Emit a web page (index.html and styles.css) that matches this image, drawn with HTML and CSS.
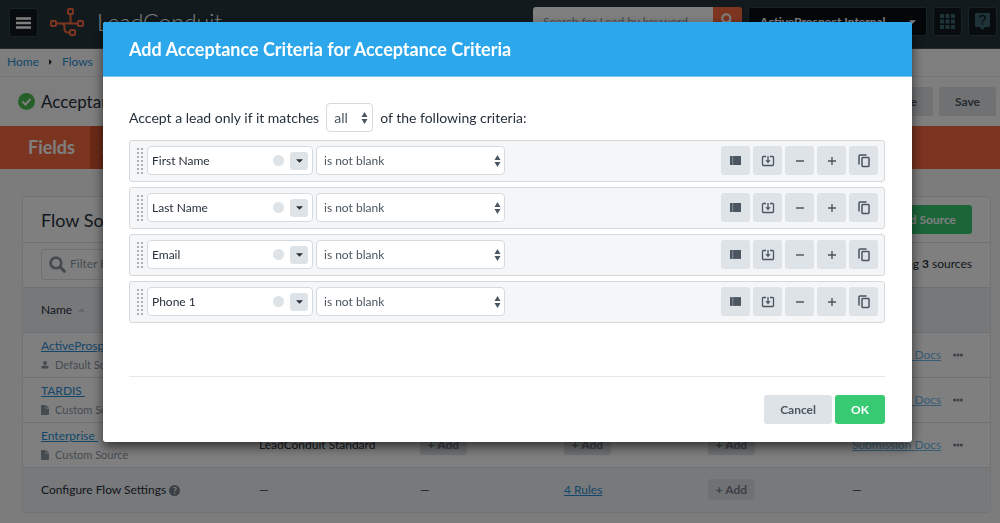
FILE: index.html
```html
<!DOCTYPE html>
<html lang="en">
<head>
<meta charset="utf-8">
<title>LeadConduit</title>
<link rel="stylesheet" href="styles.css">
</head>
<body>
<svg class="sprite" aria-hidden="true">
  <symbol id="i-list" viewBox="0 0 10 8"><path d="M0 0h10v8H0z" fill="currentColor"/><path d="M2.500 0v8" stroke="#9aa2aa" stroke-width=".7"/></symbol>
  <symbol id="i-down" viewBox="0 0 14 12"><path d="M5 1.500H2.200q-.7 0-.7.700v7.600q0 .7.700.7h9.600q.7 0 .7-.7V2.200q0-.7-.7-.7H9M7 1v6" fill="none" stroke="currentColor" stroke-width="1.300"/><path d="M4.300 5.200h5.400L7 8.300z" fill="currentColor"/></symbol>
  <symbol id="i-minus" viewBox="0 0 10 10"><path d="M1 5h8" stroke="currentColor" stroke-width="1.400"/></symbol>
  <symbol id="i-plus" viewBox="0 0 10 10"><path d="M1 5h8M5 1v8" stroke="currentColor" stroke-width="1.400"/></symbol>
  <symbol id="i-copy" viewBox="0 0 12 14"><path d="M1 10.500V2q0-1 1-1H8.500M4.700 3.500h5.600q.7 0 .7.700v7.600q0 .7-.7.7H4.700q-.7 0-.7-.7V4.200q0-.7.700-.7z" fill="none" stroke="currentColor" stroke-width="1.500"/></symbol>
  <symbol id="i-search" viewBox="0 0 16 16"><circle cx="6.500" cy="6.500" r="5" fill="none" stroke="currentColor" stroke-width="2.600"/><path d="m10.300 10.300 4 4" stroke="currentColor" stroke-width="3" stroke-linecap="round"/></symbol>
  <symbol id="i-file" viewBox="0 0 8 10"><path d="M0 1q0-1 1-1h3.500v3.500H8V9q0 1-1 1H1Q0 10 0 9zM5.200 0 8 2.800H5.200z" fill="currentColor"/></symbol>
  <symbol id="i-user" viewBox="0 0 8 8"><circle cx="4" cy="2" r="2" fill="currentColor"/><path d="M.5 7.500V6q0-1 1-1l1.500-.5h2l1.500.5q1 0 1 1v1.500z" fill="currentColor"/></symbol>
  <symbol id="i-caret" viewBox="0 0 8 4"><path d="M0 0h8L4 4z" fill="currentColor"/></symbol>
  <symbol id="i-updown" viewBox="0 0 7 12"><path d="M0.500 5h6L3.500 0zM0.500 7h6l-3 5z" fill="currentColor"/></symbol>
  <symbol id="i-dots" viewBox="0 0 10 4"><circle cx="1.600" cy="2" r="1.500" fill="currentColor"/><circle cx="5" cy="2" r="1.500" fill="currentColor"/><circle cx="8.400" cy="2" r="1.500" fill="currentColor"/></symbol>
</svg>

<header class="topbar">
  <button class="square menu" aria-label="Menu"><svg width="15" height="12" viewBox="0 0 15 12"><path d="M0 1.500h15M0 6h15M0 10.500h15" stroke="#fff" stroke-width="2.600"/></svg></button>
  <a class="brand" href="#">
    <svg width="36" height="30" viewBox="0 0 36 30" fill="none" stroke="#fb6b40" stroke-width="2"><rect x="18" y="2" width="5" height="5" rx="1"/><rect x="1" y="14" width="5" height="5" rx="1"/><rect x="28" y="14" width="5" height="5" rx="1"/><rect x="20" y="23" width="5" height="5" rx="1"/><path d="M20.500 8v8.500M7 16.500h20M11 16.500q3.500 0 3.500 3.500v2q0 3.500 4.500 3.500"/></svg>
    <span>LeadConduit</span>
  </a>
  <form class="lead-search"><input type="text" aria-label="Search for Lead by keyword" placeholder="Search for Lead by keyword"><button type="button" aria-label="Search"><svg width="13" height="13"><use href="#i-search"/></svg></button></form>
  <button class="account">ActiveProspect Internal <svg width="7" height="4"><use href="#i-caret"/></svg></button>
  <button class="square apps" aria-label="Apps"><svg width="15" height="15" viewBox="0 0 15 15" fill="currentColor"><path d="M0 0h4v4H0zM5.500 0h4v4h-4zM11 0h4v4h-4zM0 5.500h4v4H0zM5.500 5.500h4v4h-4zM11 5.500h4v4h-4zM0 11h4v4H0zM5.500 11h4v4h-4zM11 11h4v4h-4z"/></svg></button>
  <button class="square help" aria-label="Help"><svg width="15" height="17" viewBox="0 0 15 17"><path d="M1 0h13q1 0 1 1v12q0 1-1 1h-4l-2.500 3L5 14H1q-1 0-1-1V1q0-1 1-1z" fill="currentColor"/><path d="M4.800 5q0-2.500 2.700-2.500T10.200 5q0 1.500-1.400 2.200T7.500 9.300M7.500 10.300v1.500" fill="none" stroke="#12191d" stroke-width="1.300"/></svg></button>
</header>

<nav class="crumbs"><a href="#">Home</a><i></i><a href="#">Flows</a><i></i></nav>

<section class="titlebar">
  <svg width="17" height="17" viewBox="0 0 17 17"><circle cx="8.500" cy="8.500" r="8.500" fill="#4fbf50"/><path d="m4.500 8.500 3 3 5-5.500" fill="none" stroke="#fff" stroke-width="2"/></svg>
  <h1>Acceptance Criteria</h1>
  <button class="btn">Delete</button>
  <button class="btn">Save</button>
</section>

<nav class="tabs"><a href="#">Fields</a><a class="active" href="#">Sources</a></nav>

<main class="panel">
  <div class="panel-head"><h2>Flow Sources</h2><button class="btn green">Add Source</button></div>
  <div class="panel-filter">
    <label class="filter"><svg width="17" height="17"><use href="#i-search"/></svg><input type="text" aria-label="Filter Flow Sources" placeholder="Filter Flow Sources"></label>
    <span>Showing <b>3</b> sources</span>
  </div>
  <table>
    <colgroup><col class="c-name"><col class="c-type"><col class="c-add"><col class="c-add"><col class="c-add"><col></colgroup>
    <thead><tr><th>Name <svg class="sort" width="7" height="4" viewBox="0 0 8 4"><path d="M0 4h8L4 0z" fill="currentColor"/></svg></th><th></th><th></th><th></th><th></th><th></th></tr></thead>
    <tbody>
      <tr><td><a href="#">ActiveProspect</a><small><svg width="8" height="8"><use href="#i-user"/></svg>Default Source</small></td><td>LeadConduit Standard</td><td><button class="add">+ Add</button></td><td><button class="add">+ Add</button></td><td><button class="add">+ Add</button></td><td><a class="docs" href="#">Submission Docs</a><svg class="dots" width="10" height="4"><use href="#i-dots"/></svg></td></tr>
      <tr><td><a href="#">TARDIS&nbsp;</a><small><svg width="8" height="10"><use href="#i-file"/></svg>Custom Source</small></td><td>LeadConduit Standard</td><td><button class="add">+ Add</button></td><td><button class="add">+ Add</button></td><td><button class="add">+ Add</button></td><td><a class="docs" href="#">Submission Docs</a><svg class="dots" width="10" height="4"><use href="#i-dots"/></svg></td></tr>
      <tr><td><a href="#">Enterprise&nbsp;</a><small><svg width="8" height="10"><use href="#i-file"/></svg>Custom Source</small></td><td>LeadConduit Standard</td><td><button class="add">+ Add</button></td><td><button class="add">+ Add</button></td><td><button class="add">+ Add</button></td><td><a class="docs" href="#">Submission Docs</a><svg class="dots" width="10" height="4"><use href="#i-dots"/></svg></td></tr>
      <tr class="settings"><td>Configure Flow Settings <span class="q">?</span></td><td>—</td><td>—</td><td><a href="#">4 Rules</a></td><td><button class="add">+ Add</button></td><td>—</td></tr>
    </tbody>
  </table>
</main>

<div class="overlay">
  <div class="modal" role="dialog" aria-labelledby="dlg-title">
    <h2 id="dlg-title">Add Acceptance Criteria for Acceptance Criteria</h2>
    <div class="modal-body">
      <div class="sentence"><label for="mode">Accept a lead only if it matches</label>
        <span class="pick mode"><select id="mode"><option>all</option><option>any</option></select><svg width="7" height="12"><use href="#i-updown"/></svg></span>
        <span>of the following criteria:</span></div>
      <div class="rules" id="rules"></div>
      <div class="actions"><button class="btn">Cancel</button><button class="btn green">OK</button></div>
    </div>
  </div>
</div>
<script src="app.js"></script>
</body>
</html>
```
FILE: styles.css
```css
* { box-sizing: border-box; }
body { margin: 0; height: 100vh; overflow: hidden; background: #f8f8f8; color: #27313c; font: 12px/16px Lato, "Open Sans", sans-serif; }
button, input, select { font: inherit; color: inherit; margin: 0; }
button { border: 0; padding: 0; cursor: pointer; }
h1, h2 { margin: 0; font-weight: 400; }
a { color: #2a8fd8; }
.sprite { position: absolute; width: 0; height: 0; }

.topbar { display: flex; align-items: flex-start; gap: 6px; height: 49px; padding: 7px 3px 0 9px; background: #24343b; border-bottom: 1px solid #4a5357; }
.square { display: flex; align-items: center; justify-content: center; width: 29px; height: 29px; background: #12191d; border: 1px solid #2c4650; border-radius: 3px; color: #3c6670; }
.menu { margin-top: 1px; }
.brand { display: flex; flex: 1; align-items: center; gap: 11px; margin-left: 6px; color: #fff; font-size: 23px; font-weight: 300; line-height: 30px; text-decoration: none; }
.lead-search { display: flex; width: 209px; height: 29px; border-radius: 3px; overflow: hidden; }
.lead-search input { flex: 1; min-width: 0; padding: 0 10px; border: 0; background: #fff; }
.lead-search button { width: 29px; background: #fb6b40; color: #fff; }
::placeholder { color: #8b979f; opacity: 1; }
.account { display: flex; align-items: center; justify-content: space-between; width: 179px; height: 29px; padding: 0 10px 0 11px; background: #070d10; border: 1px solid #2c4650; border-radius: 3px; color: #fff; font-weight: 700; }

.crumbs { display: flex; align-items: center; gap: 10px; height: 28px; padding: 0 7px 2px; background: #fcfcfc; border-bottom: 1px solid #ececec; }
.crumbs a { text-decoration: none; }
.crumbs i { border: 3px solid transparent; border-left-color: #27313c; border-right: 0; }
.titlebar { display: flex; align-items: center; gap: 6px; height: 49px; padding: 0 4px 0 18px; background: #fcfcfc; }
.titlebar h1 { flex: 1; font-size: 17px; line-height: 24px; }
.btn { height: 29px; padding: 0 16px; border-radius: 3px; background: #dee3e7; color: #4b5661; font-weight: 700; }
.btn.green { background: #38ca73; color: #fff; }
.tabs { display: flex; height: 43px; background: #f66840; color: #fff; font-size: 18px; font-weight: 700; line-height: 43px; }
.tabs a { padding: 0 15px 0 28px; color: inherit; text-decoration: none; }
.tabs .active { padding: 0 12px; background: #d8552f; }

.panel { margin: 27px 9px 0 22px; border: 1px solid #e2e6e9; border-radius: 3px; background: #fff; }
.panel-head { display: flex; align-items: center; justify-content: space-between; height: 46px; padding: 0 18px; border-bottom: 1px solid #dbe2e6; }
.panel-head h2 { font-size: 18px; line-height: 24px; }
.panel-filter { display: flex; align-items: center; justify-content: space-between; height: 44px; padding: 0 18px 2px; }
.filter { display: flex; align-items: center; gap: 4px; width: 220px; height: 31px; padding: 0 7px; border: 1px solid #dbe2e6; border-radius: 3px; color: #8b979f; }
.filter input { flex: 1; min-width: 0; padding: 0; border: 0; background: none; }
table { width: 100%; table-layout: fixed; border-spacing: 0; }
.c-name { width: 218px; }
.c-type { width: 161px; }
.c-add { width: 144px; }
th, td { height: 45px; padding: 0 0 1px 18px; border-top: 1px solid #dbe2e6; text-align: left; vertical-align: middle; white-space: nowrap; }
th { background: #eef1f4; font-weight: 400; }
td small { display: flex; align-items: center; gap: 6px; margin-top: 4px; color: #8b979f; font-size: 11px; line-height: 14px; }
.settings td { background: #eff2f5; }
.sort, .dots { margin-left: 3px; vertical-align: middle; color: #c0c7cc; }
.dots { margin-left: 12px; color: #75808a; }
.docs { color: #6fb9ea; }
.add { width: 47px; height: 21px; border-radius: 3px; background: #dee3e7; color: #75808a; font-weight: 700; vertical-align: middle; }
.q { display: inline-block; width: 11px; height: 11px; border-radius: 50%; background: #75808a; color: #fff; font-size: 9px; font-weight: 700; line-height: 11px; text-align: center; vertical-align: middle; }

.overlay { position: fixed; inset: 0; padding: 22px 88px 0 103px; background: rgba(0, 0, 0, .5); }
.modal { border-radius: 3px; background: #fff; box-shadow: 0 5px 12px rgba(0, 0, 0, .6); overflow: hidden; }
.modal h2 { height: 55px; padding: 0 26px; background: #2da7ec; border-bottom: 1px solid #7cc8f3; color: #fff; font-size: 18px; font-weight: 700; line-height: 54px; }
.modal-body { padding: 26px 27px 18px 26px; }
.sentence { display: flex; align-items: center; gap: 7px; font-size: 14px; line-height: 20px; }
.pick { position: relative; display: flex; align-items: center; height: 29px; border: 1px solid #d3dbe1; border-radius: 4px; background: #fff; color: #4b5661; }
.pick select { width: 100%; height: 100%; padding: 0 7px; border: 0; background: none; appearance: none; }
.pick svg { position: absolute; right: 4px; pointer-events: none; }
.mode { width: 47px; }
.rules { display: grid; gap: 5px; margin-top: 8px; }
.rule { display: flex; align-items: center; gap: 3px; height: 42px; padding: 0 6px 1px 6px; border: 1px solid #d5d8da; border-radius: 3px; background: #f4f6f8; }
.grip { width: 8px; height: 28px; background: radial-gradient(circle, #aab0b5 1px, transparent 1px) 0 0 / 4px 4px; }
.field { display: flex; align-items: center; width: 166px; height: 29px; padding: 0 4px; border: 1px solid #d3dbe1; border-radius: 4px; background: #fff; }
.field input { flex: 1; min-width: 0; padding: 0; border: 0; background: none; }
.dot { width: 11px; height: 11px; margin-right: 6px; border-radius: 50%; background: #dee3e7; }
.drop { display: flex; align-items: center; justify-content: center; width: 18px; height: 18px; border-radius: 3px; background: #dee3e7; }
.op { width: 189px; margin-right: auto; }
.rule .op svg { right: 3px; }
.tool { display: flex; align-items: center; justify-content: center; width: 29px; height: 29px; border-radius: 3px; background: #dee3e7; color: #4b5661; }
.actions { display: flex; justify-content: flex-end; gap: 3px; margin-top: 53px; padding-top: 18px; border-top: 1px solid #e3e9ef; }
.actions .green { min-width: 50px; }
```
FILE: app.js
```js
const tools = [["list", "Value list", 11, 9], ["down", "Insert", 14, 12], ["minus", "Remove", 10, 10], ["plus", "Add", 10, 10], ["copy", "Duplicate", 12, 14]];
document.getElementById("rules").innerHTML = ["First Name", "Last Name", "Email", "Phone 1"].map(name => `
  <div class="rule"><span class="grip"></span>
    <div class="field"><input type="text" aria-label="Field" value="${name}"><span class="dot"></span><button class="drop" aria-label="Choose field"><svg width="7" height="4"><use href="#i-caret"/></svg></button></div>
    <span class="pick op"><select aria-label="Operator for ${name}"><option>is not blank</option></select><svg width="7" height="12"><use href="#i-updown"/></svg></span>
    ${tools.map(([id, label, w, h]) => `<button class="tool" aria-label="${label}"><svg width="${w}" height="${h}"><use href="#i-${id}"/></svg></button>`).join("")}
  </div>`).join("");
```
